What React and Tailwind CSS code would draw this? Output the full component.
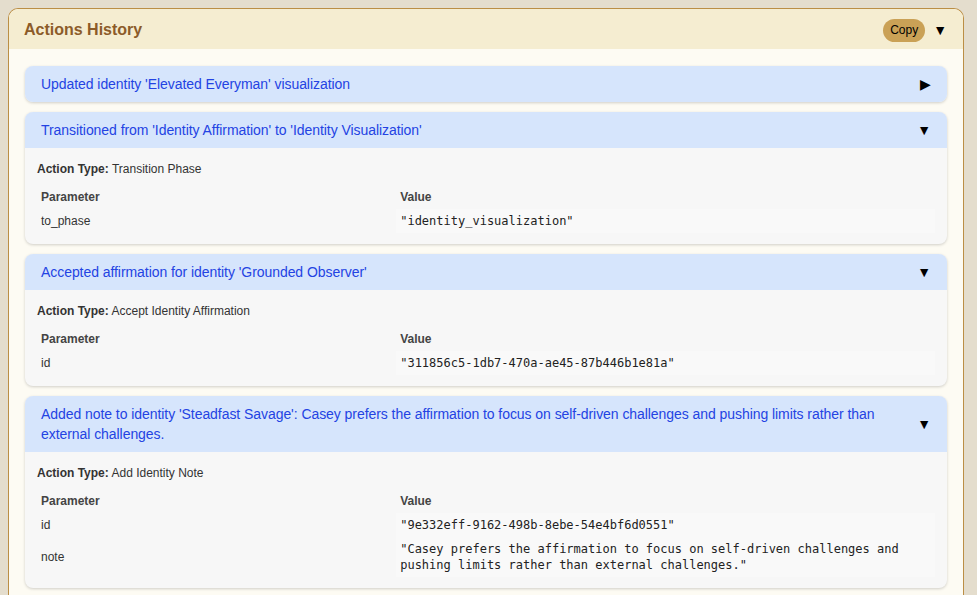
import React, { useState } from "react";

const actions = [
  {
    title: "Updated identity 'Elevated Everyman' visualization",
    open: false,
    type: "Update Identity Visualization",
    params: [],
  },
  {
    title: "Transitioned from 'Identity Affirmation' to 'Identity Visualization'",
    open: true,
    type: "Transition Phase",
    params: [["to_phase", '"identity_visualization"']],
  },
  {
    title: "Accepted affirmation for identity 'Grounded Observer'",
    open: true,
    type: "Accept Identity Affirmation",
    params: [["id", '"311856c5-1db7-470a-ae45-87b446b1e81a"']],
  },
  {
    title:
      "Added note to identity 'Steadfast Savage': Casey prefers the affirmation to focus on self-driven challenges and pushing limits rather than external challenges.",
    open: true,
    type: "Add Identity Note",
    params: [
      ["id", '"9e332eff-9162-498b-8ebe-54e4bf6d0551"'],
      [
        "note",
        '"Casey prefers the affirmation to focus on self-driven challenges and pushing limits rather than external challenges."',
      ],
    ],
  },
];

function ActionCard({ action }) {
  const [open, setOpen] = useState(action.open);
  return (
    <div className="rounded-lg overflow-hidden bg-[#f7f7f7] shadow-[0_1px_3px_rgba(0,0,0,0.18)]">
      <button
        onClick={() => setOpen(!open)}
        className="w-full flex items-center justify-between gap-2 bg-[#d6e5fc] pl-4 pr-4 py-2 text-left"
      >
        <span className="text-[14px] leading-5 tracking-[-0.06px] text-[#2343e3]">
          {action.title}
        </span>
        <span className="text-[14px] leading-5 text-black shrink-0">
          {open ? "▼" : "▶"}
        </span>
      </button>
      {open && (
        <div className="px-3 pt-[13px] pb-[11px] text-[12px] leading-4 text-[#333]">
          <div>
            <span className="font-bold">Action Type:</span> {action.type}
          </div>
          <table className="w-full mt-2 border-collapse">
            <thead>
              <tr>
                <th className="w-2/5 text-left font-bold text-[#444] px-1 py-1 h-6">
                  Parameter
                </th>
                <th className="text-left font-bold text-[#444] px-1 py-1 h-6">
                  Value
                </th>
              </tr>
            </thead>
            <tbody>
              {action.params.map(([k, v]) => (
                <tr key={k}>
                  <td className="px-1 py-1 align-middle">{k}</td>
                  <td className="px-1 py-1 pr-8 font-['DejaVu_Sans_Mono',monospace] text-[12px] leading-4 bg-[#f9f9f9] text-[#222]">
                    {v}
                  </td>
                </tr>
              ))}
            </tbody>
          </table>
        </div>
      )}
    </div>
  );
}

export default function App() {
  const [open, setOpen] = useState(true);
  return (
    <div className="min-h-screen bg-[#e4ddcd] pt-2 pl-2 font-['Liberation_Sans',Arial,sans-serif]">
      <div className="w-[956px] rounded-t-[10px] border border-b-0 border-[#bb8e45] bg-[#fdfbf3] overflow-hidden">
        <div className="flex items-center justify-between bg-[#f5edd1] h-10 pt-[2px] pl-[15px] pr-4">
          <h2 className="text-[16px] font-bold text-[#8c5b29]">
            Actions History
          </h2>
          <div className="flex items-center gap-2">
            <button className="rounded-full bg-[#caa156] px-[7px] py-1 text-[12px] leading-[15px] text-black">
              Copy
            </button>
            <button
              onClick={() => setOpen(!open)}
              className="text-[14px] text-black"
            >
              ▼
            </button>
          </div>
        </div>
        {open && (
          <div className="p-4 pt-[17px] flex flex-col gap-2.5">
            {actions.map((a) => (
              <ActionCard key={a.title} action={a} />
            ))}
          </div>
        )}
      </div>
    </div>
  );
}
